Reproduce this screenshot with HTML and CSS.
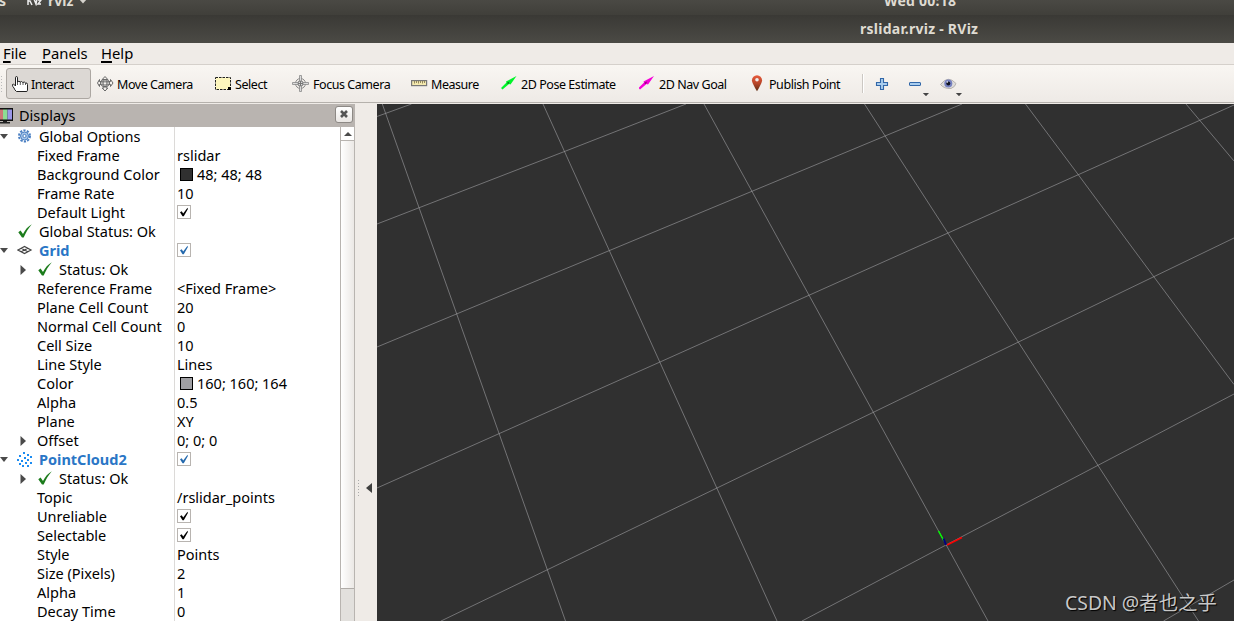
FILE: index.html
```html
<!DOCTYPE html>
<html lang="en">
<head>
<meta charset="utf-8">
<title>rslidar.rviz - RViz</title>
<link rel="stylesheet" href="styles.css">
</head>
<body>
<svg class="defs" width="0" height="0">
  <symbol id="tick" viewBox="0 0 14 14"><path d="M.3 8.200 2.600 6.600 5 10C7.300 5.400 9.800 2.600 13.800.2 10.200 4.400 7.900 8.600 5.700 13.400H4Z" fill="#1c7c1c"/></symbol>
  <symbol id="check" viewBox="0 0 14 14"><rect x=".5" y=".5" width="13" height="13" fill="#fff" stroke="#b8b4b0"/><path d="M3 7.300 4.700 6.300 6.200 8.600 10.500 2.800 10.900 4 6.800 11.200H5.500Z" fill="currentColor"/></symbol>
  <symbol id="down" viewBox="0 0 8 5"><path d="M0 0H8L4 5Z" fill="#4a4a4a"/></symbol>
  <symbol id="right" viewBox="0 0 6 10"><path d="M.5 0V10L6 5Z" fill="#4a4a4a"/></symbol>
</svg>

<header class="shell">
  <div class="topbar">
    <span class="act">s</span>
    <svg class="app-icon" width="16" height="14" viewBox="0 0 16 14"><path d="M2 3V13M2 9H4L6 13M5 4 6 8M8 7 10 12 11 7M12 8H15L12 12H15" stroke="#eee" stroke-width="1.500" fill="none"/></svg>
    <span class="app">rviz</span>
    <svg class="app-down" width="8" height="5" viewBox="0 0 8 5"><path d="M0 0H8L4 4.500Z" fill="#d5d2cc"/></svg>
    <span class="clock">Wed 00:18</span>
  </div>
  <div class="title"><span>rslidar.rviz - RViz</span></div>
</header>

<nav class="menu"><span><u>F</u>ile</span><span><u>P</u>anels</span><span><u>H</u>elp</span></nav>

<div class="toolbar">
  <div class="handle"></div>
  <div class="tool active">
    <svg width="18" height="18" viewBox="0 0 18 18"><path d="M4.500 11V2.800Q4.500 1.500 5.500 1.500T6.500 2.800V7Q8 5.300 9.200 7 10.600 5.800 11.800 7.500 13.500 6.300 14.500 8 16.500 7.500 16.500 9.500V15.500Q16.500 16.500 15 16.500H5.500Q3.500 15 3 13 1.300 11.500 1.500 9.500L2.500 9Z" fill="#fff" stroke="#222"/><path d="M6.500 7V10M9.300 7V10M12 7.500V10M14.500 8V10" stroke="#333" stroke-width=".8"/></svg>
    <span>Interact</span></div>
  <div class="tool">
    <svg width="18" height="18" viewBox="0 0 18 18"><path d="M8 1.500 10.800 4.500H9V7L13.500 6.500V4.500L16 8 13.500 11.500V9.500L9 9V13H10.800L8 16 5.200 13H7V9L2.500 9.500V11.500L.5 8 2.500 4.500V6.500L7 7V4.500H5.200Z" fill="#f5f2ee" stroke="#666"/><ellipse cx="8" cy="8" rx="4.500" ry="3.500" fill="none" stroke="#666"/><path d="M4 7H12M6 4V12M10 4V12" stroke="#777" stroke-width=".7"/></svg>
    <span>Move Camera</span></div>
  <div class="tool">
    <svg width="18" height="18" viewBox="0 0 18 18"><rect x=".5" y="2.500" width="15" height="12" fill="#fdf6bd" stroke="#222" stroke-dasharray="2.500 1"/><path d="M13 12H16V15H13Z" fill="#000"/></svg>
    <span>Select</span></div>
  <div class="tool">
    <svg width="18" height="18" viewBox="0 0 18 18"><circle cx="8.500" cy="8.500" r="5" fill="none" stroke="#888"/><circle cx="8.500" cy="8.500" r="2.700" fill="#ddd" stroke="#777"/><path d="M7.500.5H9.500V6H7.500ZM7.500 11H9.500V16.500H7.500ZM.5 7.500H6V9.500H.5ZM11 7.500H16.500V9.500H11Z" fill="#ddd" stroke="#888" stroke-width=".8"/><path d="M8.500 6V11M6 8.500H11" stroke="#777"/></svg>
    <span class="wide1">Focus Camera</span></div>
  <div class="tool">
    <svg width="18" height="18" viewBox="0 0 18 18"><rect x=".6" y="5.600" width="15" height="5" fill="#f4e9ae" stroke="#777" stroke-width="1.200"/><path d="M3.500 6V8.500M5.500 6V8M7.500 6V8.500M9.500 6V8M11.500 6V8.500M13.500 6V8" stroke="#887d55" stroke-width=".9"/></svg>
    <span>Measure</span></div>
  <div class="tool">
    <svg width="18" height="18" viewBox="0 0 18 18"><path d="M0 13 5.500 7.500 5 6.500 15.500 1 9.500 9.500 8 9 1.500 14.500Z" fill="#00f52a"/><path d="M5.500 8 8.500 6.500 7.500 9Z" fill="#087b16"/></svg>
    <span>2D Pose Estimate</span></div>
  <div class="tool">
    <svg width="18" height="18" viewBox="0 0 18 18"><path d="M-.5 13 5 7.500 4.500 6.500 15 1 9 9.500 7.500 9 1 14.500Z" fill="#f500d8"/><path d="M5 8 8 6.500 7 9Z" fill="#82066e"/></svg>
    <span>2D Nav Goal</span></div>
  <div class="tool">
    <svg width="18" height="18" viewBox="0 0 18 18"><defs><linearGradient id="pin" x2="0" y2="1"><stop stop-color="#e85b3c"/><stop offset=".5" stop-color="#b84528"/><stop offset="1" stop-color="#5b2c13"/></linearGradient></defs><path d="M7 16.300Q2 8 1.900 5.500A5.100 5.200 0 0 1 12.100 5.500Q12 8 7 16.300Z" fill="url(#pin)"/><circle cx="7" cy="4.800" r="1.800" fill="#eee"/></svg>
    <span class="pull">Publish Point</span></div>
  <div class="sep"></div>
  <svg width="14" height="14" viewBox="0 0 14 14"><path d="M5.500 1.500H8.500V5.500H12.500V8.500H8.500V12.500H5.500V8.500H1.500V5.500H5.500Z" fill="#a9cdee" stroke="#3267a8" stroke-width="1.100"/></svg>
  <svg width="21" height="24" viewBox="0 0 21 24"><rect x="1.500" y="10.500" width="11" height="3" fill="#a9cdee" stroke="#3267a8" rx=".5"/><path d="M14.800 21H21L18 24.200Z" fill="#444"/></svg>
  <svg width="24" height="24" viewBox="0 0 24 24"><path d="M.5 12.500Q8 2.500 16 11.500 15 15 11 16.500 4 17 .5 12.500Z" fill="#dfdddb" stroke="#aaa6a2" stroke-width=".8"/><circle cx="8.300" cy="11.500" r="4" fill="#7681c0"/><circle cx="8.300" cy="11.500" r="2" fill="#101421"/><circle cx="7.300" cy="10" r=".8" fill="#fff"/><path d="M15.800 21H22L19 24.200Z" fill="#444"/></svg>
</div>

<main class="work">
  <section class="displays">
    <div class="head">
      <svg width="14" height="16" viewBox="0 0 14 16"><rect x="-3" y="0" width="16" height="13" fill="#111"/><path d="M0 1.500H3V11.500H0Z" fill="#c77"/><path d="M3 1.500H7.500V11.500H3Z" fill="#8ddc93"/><path d="M7.500 1.500H12V11.500H7.500Z" fill="#9a96e8"/><path d="M3 13H7V14H10V15.500H0V14H3Z" fill="#222"/></svg>
      <span>Displays</span>
      <div class="close"><svg width="8" height="8" viewBox="0 0 8 8"><path d="M1 1 7 7M7 1 1 7" stroke="#555" stroke-width="2.600"/></svg></div>
    </div>
    <div class="body">
      <div class="tree">
        <div class="row"><div class="k top"><svg class="d"><use href="#down"/></svg><svg class="ic" viewBox="0 0 16 16"><circle cx="7.500" cy="7" r="5.500" fill="none" stroke="#4a7fc2" stroke-width="2" stroke-dasharray="2.200 1.250"/><circle cx="7.500" cy="7" r="4" fill="#a9c7ea" stroke="#4a7fc2"/><circle cx="7.500" cy="7" r="1.600" fill="#fff" stroke="#4a7fc2"/></svg>Global Options</div><div class="v"></div></div>
        <div class="row"><div class="k">Fixed Frame</div><div class="v">rslidar</div></div>
        <div class="row"><div class="k">Background Color</div><div class="v"><i class="sw dark"></i>48; 48; 48</div></div>
        <div class="row"><div class="k">Frame Rate</div><div class="v">10</div></div>
        <div class="row"><div class="k">Default Light</div><div class="v"><svg class="c"><use href="#check"/></svg></div></div>
        <div class="row"><div class="k top"><svg class="d"></svg><svg class="tk"><use href="#tick"/></svg>Global Status: Ok</div><div class="v"></div></div>
        <div class="row"><div class="k top name"><svg class="d"><use href="#down"/></svg><svg class="ic" viewBox="0 0 16 16"><path d="M1 7 7.500 3.500 14 7 7.500 10.500ZM4.200 5.200 10.800 8.800M10.800 5.200 4.200 8.800" fill="none" stroke="#444" stroke-width="1.200"/></svg><b>Grid</b></div><div class="v"><svg class="c blue"><use href="#check"/></svg></div></div>
        <div class="row"><div class="k sub"><svg class="r"><use href="#right"/></svg><svg class="tk"><use href="#tick"/></svg>Status: Ok</div><div class="v"></div></div>
        <div class="row"><div class="k">Reference Frame</div><div class="v">&lt;Fixed Frame&gt;</div></div>
        <div class="row"><div class="k">Plane Cell Count</div><div class="v">20</div></div>
        <div class="row"><div class="k">Normal Cell Count</div><div class="v">0</div></div>
        <div class="row"><div class="k">Cell Size</div><div class="v">10</div></div>
        <div class="row"><div class="k">Line Style</div><div class="v">Lines</div></div>
        <div class="row"><div class="k">Color</div><div class="v"><i class="sw grey"></i>160; 160; 164</div></div>
        <div class="row"><div class="k">Alpha</div><div class="v">0.5</div></div>
        <div class="row"><div class="k">Plane</div><div class="v">XY</div></div>
        <div class="row"><div class="k sub"><svg class="r wide"><use href="#right"/></svg>Offset</div><div class="v">0; 0; 0</div></div>
        <div class="row"><div class="k top name"><svg class="d"><use href="#down"/></svg><svg class="ic" viewBox="0 0 16 16"><path d="M6 0h2v2H6zM10 2h2v2H10zM2 3h2v2H2zM7 5h2v2H7zM13 4h2v2H13zM0 7h2v2H0zM4 8h2v2H4zM10 7h2v2H10zM8 10h2v2H8zM2 11h2v2H2zM13 10h2v2H13zM5 13h2v2H5zM10 13h2v2H10z" fill="#1b8cf2"/></svg><b>PointCloud2</b></div><div class="v"><svg class="c blue"><use href="#check"/></svg></div></div>
        <div class="row"><div class="k sub"><svg class="r"><use href="#right"/></svg><svg class="tk"><use href="#tick"/></svg>Status: Ok</div><div class="v"></div></div>
        <div class="row"><div class="k">Topic</div><div class="v">/rslidar_points</div></div>
        <div class="row"><div class="k">Unreliable</div><div class="v"><svg class="c"><use href="#check"/></svg></div></div>
        <div class="row"><div class="k">Selectable</div><div class="v"><svg class="c"><use href="#check"/></svg></div></div>
        <div class="row"><div class="k">Style</div><div class="v">Points</div></div>
        <div class="row"><div class="k">Size (Pixels)</div><div class="v">2</div></div>
        <div class="row"><div class="k">Alpha</div><div class="v">1</div></div>
        <div class="row"><div class="k">Decay Time</div><div class="v">0</div></div>
      </div>
      <div class="scroll">
        <div class="up"><svg width="8" height="4" viewBox="0 0 8 4"><path d="M0 4H8L4 0Z" fill="#4a4a4a"/></svg></div>
        <div class="thumb"></div>
        <div class="trough"></div>
      </div>
    </div>
  </section>
  <div class="splitter"><div class="dots"></div><svg width="6" height="10" viewBox="0 0 6 10"><path d="M6 0V10L0 5Z" fill="#3f3f3f"/></svg></div>
  <section class="view">
    <svg width="857" height="517" viewBox="377 104 857 517">
      <g stroke="#a0a0a4" stroke-opacity=".6" fill="none">
        <path d="M382.300 104 565.500 621M543 104 777 621M704 104 988 621M864.500 104 1198.500 621M1025.500 104 1078.500 175 1154 277 1234 384.500M1186 104 1234 161"/>
        <path d="M377 116.500 411.500 104M377 224 564.500 151.500 686 104M377 347 609.500 250.500 962 104M377 488 660 362 948 233 1234 105M441 621 717 488 1018.500 342 1234 238M802 621 946 545 1234 394M1163.500 621 1234 580"/>
      </g>
      <path d="M938.500 531 944 541" stroke="#0f0" stroke-width="1.500"/>
      <path d="M943.500 538.500 946 545" stroke="#000080" stroke-width="2"/>
      <path d="M947 545 962 537.500" stroke="#f00" stroke-width="1.500"/>
    </svg>
    <div class="mark">CSDN @者也之乎</div>
  </section>
</main>
</body>
</html>
```
FILE: styles.css
```css
* { box-sizing: border-box; }
body { margin: 0; width: 1234px; height: 621px; overflow: hidden; display: flex; flex-direction: column; background: #efebe7; color: #000; font: 14.500px/19px "Noto Sans", "Open Sans", sans-serif; }
svg { display: block; flex: none; }
.defs { position: absolute; }

.shell { flex: none; height: 43px; font-weight: 700; color: #dfdbd2; font-size: 14px; }
.topbar { height: 15px; overflow: hidden; display: flex; background: linear-gradient(#4a4944, #403f3a); }
.topbar span { line-height: 20px; margin-top: -9px; white-space: nowrap; }
.act { width: 26px; margin-left: -1px; }
.app-icon { margin-top: -8px; margin-left: 1px; }
.app { width: 31px; margin-left: 6px; }
.app-down { margin-top: -1px; }
.topbar .clock { margin-left: 797px; letter-spacing: .25px; }
.title { height: 28px; background: linear-gradient(#3a3935, #4b4a45); display: flex; padding: 4px 0 0 860px; letter-spacing: .26px; }

.menu { flex: none; height: 22px; border-bottom: 1px solid #d5d0cb; display: flex; padding: 1px 0 0 3px; font-size: 14.800px; }
.menu span:nth-child(1) { width: 39px; }
.menu span:nth-child(2) { width: 59px; }
.menu u { text-decoration-thickness: 2px; text-underline-offset: 2px; }

.toolbar { flex: none; height: 38px; border-bottom: 1px solid #b5b1ac; background: linear-gradient(#f9f6f2, #eeeae6); display: grid; grid-template-columns: 6px 91px 118px 77px 119px 90px 138px 111px 112px 13px 33px 32px 24px; align-items: center; font-size: 12.500px; letter-spacing: -.45px; }
.tool { display: flex; align-items: center; gap: 2px; white-space: nowrap; }
.tool span { padding-top: 2px; }
.tool .wide1 { margin-left: 1px; }
.tool .pull { margin-left: -1px; }
.tool.active { width: 85px; height: 31px; padding-left: 4px; border: 1px solid #aca7a2; border-radius: 3px; background: #dcd8d4; letter-spacing: -.4px; }
.handle { width: 1px; height: 16px; margin-left: 1px; background: repeating-linear-gradient(#bbb 0 1px, transparent 1px 3px); }
.sep { width: 2px; height: 19px; background: linear-gradient(90deg, #ccc8c3 50%, #fff 50%); }

.work { flex: 1; min-height: 0; padding-top: 1px; display: flex; }
.displays { width: 355px; display: flex; flex-direction: column; }
.head { flex: none; height: 23px; background: #b9b4b0; display: flex; align-items: center; }
.head span { margin-left: 5px; flex: 1; }
.close { width: 18px; height: 17px; margin: 0 2px 3px 0; border: 1px solid #8d8985; border-radius: 3px; background: linear-gradient(#fff, #e9e6e3); display: flex; align-items: center; justify-content: center; }
.body { flex: 1; min-height: 0; display: flex; overflow: hidden; background: #fff; }
.tree { width: 340px; }
.row { height: 19px; display: flex; white-space: nowrap; }
.k { width: 175px; padding-left: 37px; border-right: 1px solid #dcdad8; display: flex; align-items: center; }
.k.top { padding-left: 0; }
.k.sub { padding-left: 20px; }
.v { flex: 1; padding-left: 2px; display: flex; align-items: center; }
.name { color: #2a76c6; }
.d { width: 8px; height: 5px; margin-right: 9px; }
.ic { width: 16px; height: 16px; margin-right: 6px; }
.tk { width: 14px; height: 14px; margin: 0 7px 1px 1px; }
.sub .tk { margin: 0 7px 1px 12px; }
.r { width: 6px; height: 10px; }
.r.wide { margin-right: 11px; }
.c { width: 14px; height: 14px; margin-bottom: 1px; }
.c.blue { color: #2469ad; }
.sw { width: 13px; height: 13px; margin: 0 4px 1px 3px; border: 1px solid #000; }
.dark { background: #303030; }
.grey { background: #a0a0a4; }
.scroll { width: 15px; border: 1px solid #b8b4b0; border-width: 0 1px; display: flex; flex-direction: column; }
.up { height: 14px; border-bottom: 1px solid #b8b4b0; display: flex; align-items: center; justify-content: center; }
.thumb { height: 448px; border-bottom: 1px solid #b0aca8; background: linear-gradient(90deg, #fff, #ebe8e5); }
.trough { flex: 1; background: #e2e0dd; }
.splitter { width: 22px; display: flex; align-items: center; padding: 250px 0 0 3px; }
.dots { width: 1px; height: 16px; margin-right: 7px; background: repeating-linear-gradient(#aaa 0 1px, transparent 1px 3px); }
.view { position: relative; width: 857px; background: #303030; }
.mark { position: absolute; left: 688px; top: 485px; font: 19.400px/27px "Noto Sans", "Noto Sans CJK SC", sans-serif; color: #c8c8c8; text-shadow: 1px 1px 1px #000; white-space: nowrap; }
```
